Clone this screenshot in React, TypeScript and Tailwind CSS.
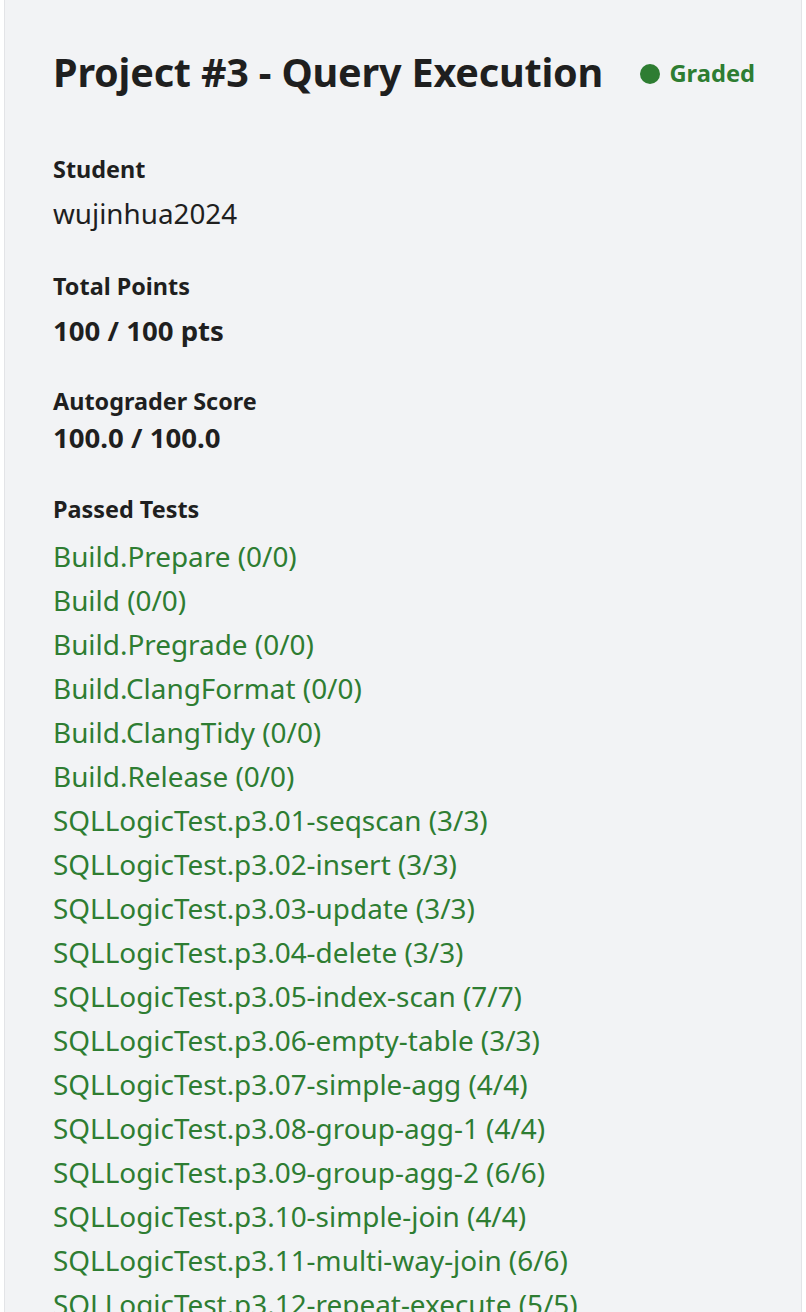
import React from 'react'

const passedTests = [
  'Build.Prepare (0/0)',
  'Build (0/0)',
  'Build.Pregrade (0/0)',
  'Build.ClangFormat (0/0)',
  'Build.ClangTidy (0/0)',
  'Build.Release (0/0)',
  'SQLLogicTest.p3.01-seqscan (3/3)',
  'SQLLogicTest.p3.02-insert (3/3)',
  'SQLLogicTest.p3.03-update (3/3)',
  'SQLLogicTest.p3.04-delete (3/3)',
  'SQLLogicTest.p3.05-index-scan (7/7)',
  'SQLLogicTest.p3.06-empty-table (3/3)',
  'SQLLogicTest.p3.07-simple-agg (4/4)',
  'SQLLogicTest.p3.08-group-agg-1 (4/4)',
  'SQLLogicTest.p3.09-group-agg-2 (6/6)',
  'SQLLogicTest.p3.10-simple-join (4/4)',
  'SQLLogicTest.p3.11-multi-way-join (6/6)',
  'SQLLogicTest.p3.12-repeat-execute (5/5)',
]

export default function App() {
  return (
    <div className="h-[1312px] overflow-hidden bg-white px-[4px] font-['Noto_Sans',sans-serif] text-[#1f1f1f]">
      <div className="h-full border-x border-[#e3e4e7] bg-[#f2f3f5] pl-[48px] pr-[46px]">
        {/* Header */}
        <div className="flex items-center justify-between pt-[44px]">
          <h1 className="text-[39.6px] leading-[56px] font-bold tracking-[-0.2px]">
            Project #3 - Query Execution
          </h1>
          <div className="flex items-center gap-[9px] pt-[4px] text-[23.7px] font-bold text-[#2e7d32]">
            <span className="block h-[20px] w-[20px] rounded-full bg-[#2e7d32]" />
            Graded
          </div>
        </div>

        {/* Student */}
        <div className="mt-[53px]">
          <div className="text-[23.4px] leading-[32px] font-bold">Student</div>
          <div className="mt-[12px] text-[27.8px] leading-[32px]">wujinhua2024</div>
        </div>

        {/* Total points */}
        <div className="mt-[41px]">
          <div className="text-[23.4px] leading-[32px] font-bold">Total Points</div>
          <div className="mt-[12px] text-[27.6px] leading-[32px] font-bold">100 / 100 pts</div>
        </div>

        {/* Autograder */}
        <div className="mt-[39px]">
          <div className="text-[23.4px] leading-[32px] font-bold">Autograder Score</div>
          <div className="mt-[4px] text-[27.6px] leading-[32px] font-bold">100.0 / 100.0</div>
        </div>

        {/* Passed tests */}
        <div className="mt-[40px]">
          <div className="text-[23.4px] leading-[32px] font-bold">Passed Tests</div>
          <ul className="mt-[9px]">
            {passedTests.map((t) => (
              <li key={t} className="text-[27.9px] leading-[44px] text-[#2e7d32]">
                {t}
              </li>
            ))}
          </ul>
        </div>
      </div>
    </div>
  )
}
